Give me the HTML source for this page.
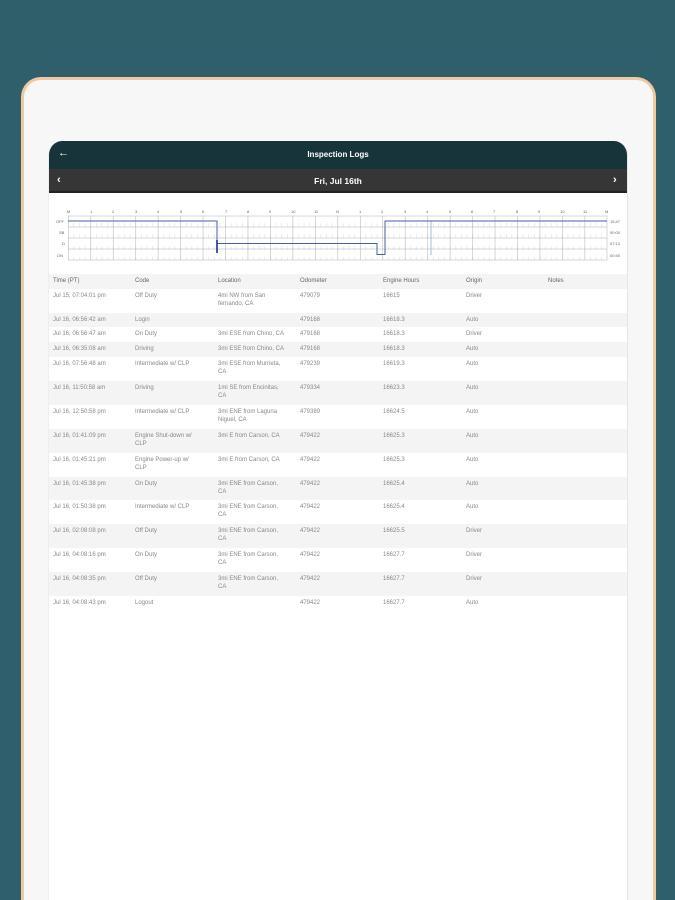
<!DOCTYPE html>
<html><head><meta charset="utf-8"><style>
*{margin:0;padding:0;box-sizing:border-box}
html,body{width:675px;height:900px;overflow:hidden}
body{background:#2e5f6a;position:relative;font-family:"Liberation Sans",sans-serif}
.bezel{position:absolute;left:21px;top:77px;width:635px;height:823px;border-radius:20px 20px 0 0;background:#f7f7f7;border:3px solid #f0c9a0;border-bottom:none}
.screen{position:absolute;left:48px;top:141px;width:580px;height:759px;background:#fff;border-radius:14px 14px 0 0;overflow:hidden;border-right:1px solid #e6e6e6;border-left:1px solid #eee}
.h1{position:absolute;left:0;top:0;width:100%;height:28px;background:#17343b;color:#fff;font-size:8px;font-weight:bold;text-align:center;line-height:28px}
.h2{position:absolute;left:0;top:28px;width:100%;height:24px;background:#363636;color:#fff;font-size:8.5px;font-weight:bold;text-align:center;line-height:24px;border-bottom:2px solid #222}
.ic{position:absolute;color:#fff;font-size:11px;font-weight:bold}
.row{position:absolute;left:0;width:578px;font-size:6px;color:#888;line-height:8px}
.row span{position:absolute;top:3px}
.g{background:#f4f4f4}
</style></head><body>
<div class="bezel"></div>
<div class="screen">
<div class="h1">Inspection Logs</div>
<div class="ic" style="left:9px;top:6px">&#8592;</div>
<div class="h2">Fri, Jul 16th</div>
<div class="ic" style="left:8px;top:33px">&#8249;</div>
<div class="ic" style="left:564px;top:33px">&#8250;</div>
<svg style="position:absolute;left:0;top:62px" width="580" height="60" viewBox="48 203 580 60">
<defs>
<pattern id="v" x="67" y="0" width="22.46" height="60" patternUnits="userSpaceOnUse"><line x1="0.3" y1="0" x2="0.3" y2="60" stroke="#b0b0b0" stroke-width="0.5"/></pattern>
<pattern id="t" x="67" y="0" width="5.615" height="60" patternUnits="userSpaceOnUse"><line x1="0.3" y1="0" x2="0.3" y2="60" stroke="#d0d0d0" stroke-width="0.4"/></pattern>
<clipPath id="tk"><rect x="67" y="223" width="539" height="4"/><rect x="67" y="234" width="539" height="4"/><rect x="67" y="246" width="539" height="4"/><rect x="67" y="257" width="539" height="3"/></clipPath>
</defs>
<rect x="67" y="216" width="539" height="44" fill="url(#t)" clip-path="url(#tk)"/>
<rect x="67" y="216" width="539" height="44" fill="url(#v)"/>
<g stroke="#b0b0b0" stroke-width="0.5"><line x1="67" y1="216" x2="606" y2="216"/><line x1="67" y1="227" x2="606" y2="227"/><line x1="67" y1="238" x2="606" y2="238"/><line x1="67" y1="249" x2="606" y2="249"/><line x1="67" y1="260" x2="606" y2="260"/><line x1="606" y1="216" x2="606" y2="260"/></g>
<g font-size="4" fill="#666" font-family="Liberation Sans">
<text x="66" y="213">M</text><text x="89" y="213">1</text><text x="111" y="213">2</text><text x="134" y="213">3</text><text x="156" y="213">4</text><text x="179" y="213">5</text><text x="201" y="213">6</text><text x="224" y="213">7</text><text x="246" y="213">8</text><text x="268" y="213">9</text><text x="290" y="213">10</text><text x="313" y="213">11</text><text x="335" y="213">N</text><text x="358" y="213">1</text><text x="380" y="213">2</text><text x="403" y="213">3</text><text x="425" y="213">4</text><text x="448" y="213">5</text><text x="470" y="213">6</text><text x="492" y="213">7</text><text x="515" y="213">8</text><text x="537" y="213">9</text><text x="559" y="213">10</text><text x="582" y="213">11</text><text x="604" y="213">M</text>
<text x="55" y="223">OFF</text><text x="58" y="234">SB</text><text x="61" y="245">D</text><text x="56" y="257">ON</text>
<text x="609" y="223">15:47</text><text x="609" y="234">00:00</text><text x="609" y="245">07:13</text><text x="609" y="257">00:40</text></g>
<line x1="430" y1="221" x2="430" y2="255" stroke="#99aacc" stroke-width="0.8"/>
<polyline points="67,221 216,221 216,243.5 376,243.5 376,254.5 384,254.5 384,221 606,221" fill="none" stroke="#4a5ea8" stroke-width="1"/>
<line x1="216" y1="240" x2="216" y2="253" stroke="#1e2f8a" stroke-width="1.6"/>
</svg>
<div class="row g" style="top:133px;height:15px;color:#666"><span style="left:4px">Time (PT)</span><span style="left:86px">Code</span><span style="left:169px">Location</span><span style="left:251px">Odometer</span><span style="left:334px">Engine Hours</span><span style="left:417px">Origin</span><span style="left:499px">Notes</span></div>
<div class="row" style="top:148px;height:24px"><span style="left:4px">Jul 15, 07:04:01 pm</span><span style="left:86px">Off Duty</span><span style="left:169px">4mi NW from San<br>fernando, CA</span><span style="left:251px">479079</span><span style="left:334px">16615</span><span style="left:417px">Driver</span></div>
<div class="row g" style="top:172px;height:14px"><span style="left:4px">Jul 16, 06:56:42 am</span><span style="left:86px">Login</span><span style="left:251px">479168</span><span style="left:334px">16618.3</span><span style="left:417px">Auto</span></div>
<div class="row" style="top:186px;height:15px"><span style="left:4px">Jul 16, 06:56:47 am</span><span style="left:86px">On Duty</span><span style="left:169px">3mi ESE from Chino, CA</span><span style="left:251px">479168</span><span style="left:334px">16618.3</span><span style="left:417px">Driver</span></div>
<div class="row g" style="top:201px;height:15px"><span style="left:4px">Jul 16, 06:35:08 am</span><span style="left:86px">Driving</span><span style="left:169px">3mi ESE from Chino, CA</span><span style="left:251px">479168</span><span style="left:334px">16618.3</span><span style="left:417px">Auto</span></div>
<div class="row" style="top:216px;height:24px"><span style="left:4px">Jul 16, 07:56:48 am</span><span style="left:86px">Intermediate w/ CLP</span><span style="left:169px">3mi ESE from Murrieta,<br>CA</span><span style="left:251px">479239</span><span style="left:334px">16619.3</span><span style="left:417px">Auto</span></div>
<div class="row g" style="top:240px;height:24px"><span style="left:4px">Jul 16, 11:50:58 am</span><span style="left:86px">Driving</span><span style="left:169px">1mi SE from Encinitas,<br>CA</span><span style="left:251px">479334</span><span style="left:334px">16623.3</span><span style="left:417px">Auto</span></div>
<div class="row" style="top:264px;height:24px"><span style="left:4px">Jul 16, 12:50:58 pm</span><span style="left:86px">Intermediate w/ CLP</span><span style="left:169px">3mi ENE from Laguna<br>Niguel, CA</span><span style="left:251px">479389</span><span style="left:334px">16624.5</span><span style="left:417px">Auto</span></div>
<div class="row g" style="top:288px;height:24px"><span style="left:4px">Jul 16, 01:41:09 pm</span><span style="left:86px">Engine Shut-down w/<br>CLP</span><span style="left:169px">3mi E from Carson, CA</span><span style="left:251px">479422</span><span style="left:334px">16625.3</span><span style="left:417px">Auto</span></div>
<div class="row" style="top:312px;height:24px"><span style="left:4px">Jul 16, 01:45:21 pm</span><span style="left:86px">Engine Power-up w/<br>CLP</span><span style="left:169px">3mi E from Carson, CA</span><span style="left:251px">479422</span><span style="left:334px">16625.3</span><span style="left:417px">Auto</span></div>
<div class="row g" style="top:336px;height:23px"><span style="left:4px">Jul 16, 01:45:38 pm</span><span style="left:86px">On Duty</span><span style="left:169px">3mi ENE from Carson,<br>CA</span><span style="left:251px">479422</span><span style="left:334px">16625.4</span><span style="left:417px">Auto</span></div>
<div class="row" style="top:359px;height:24px"><span style="left:4px">Jul 16, 01:50:38 pm</span><span style="left:86px">Intermediate w/ CLP</span><span style="left:169px">3mi ENE from Carson,<br>CA</span><span style="left:251px">479422</span><span style="left:334px">16625.4</span><span style="left:417px">Auto</span></div>
<div class="row g" style="top:383px;height:24px"><span style="left:4px">Jul 16, 02:08:08 pm</span><span style="left:86px">Off Duty</span><span style="left:169px">3mi ENE from Carson,<br>CA</span><span style="left:251px">479422</span><span style="left:334px">16625.5</span><span style="left:417px">Driver</span></div>
<div class="row" style="top:407px;height:24px"><span style="left:4px">Jul 16, 04:08:16 pm</span><span style="left:86px">On Duty</span><span style="left:169px">3mi ENE from Carson,<br>CA</span><span style="left:251px">479422</span><span style="left:334px">16627.7</span><span style="left:417px">Driver</span></div>
<div class="row g" style="top:431px;height:24px"><span style="left:4px">Jul 16, 04:08:35 pm</span><span style="left:86px">Off Duty</span><span style="left:169px">3mi ENE from Carson,<br>CA</span><span style="left:251px">479422</span><span style="left:334px">16627.7</span><span style="left:417px">Driver</span></div>
<div class="row" style="top:455px;height:15px"><span style="left:4px">Jul 16, 04:08:43 pm</span><span style="left:86px">Logout</span><span style="left:251px">479422</span><span style="left:334px">16627.7</span><span style="left:417px">Auto</span></div>
</div>
</body></html>
